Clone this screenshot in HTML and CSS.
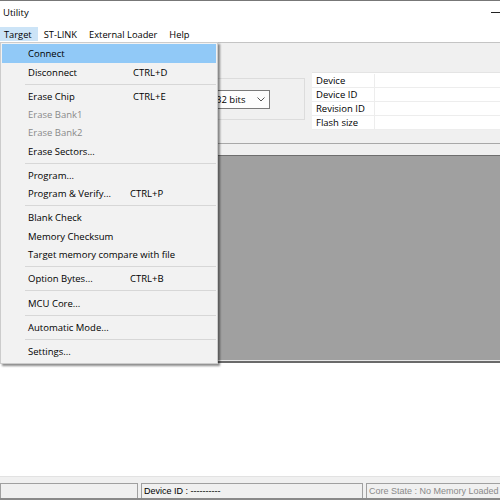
FILE: index.html
```html
<!DOCTYPE html>
<html>
<head>
<meta charset="utf-8">
<link rel="stylesheet" href="styles.css">
</head>
<body>
<div class="app">
  <div class="titlebar">
    <span class="title">Utility</span>
    <span class="minbtn"></span>
  </div>
  <div class="menubar">
    <span class="mitem active">Target</span>
    <span class="mitem">ST-LINK</span>
    <span class="mitem">External Loader</span>
    <span class="mitem">Help</span>
  </div>
  <div class="toolarea">
    <div class="groupbox">
      <div class="combo">
        <span class="combo-text">32 bits</span>
        <svg class="chev" width="8" height="5" viewBox="0 0 8 5"><path d="M0.5 0.5 L4 4 L7.5 0.5" fill="none" stroke="#555" stroke-width="1"/></svg>
      </div>
    </div>
    <div class="infotable">
      <div class="lbl">Device</div><div class="val"></div>
      <div class="lbl">Device ID</div><div class="val"></div>
      <div class="lbl">Revision ID</div><div class="val"></div>
      <div class="lbl">Flash size</div><div class="val"></div>
    </div>
  </div>
  <div class="tabbar"></div>
  <div class="grayframe"><div class="grayarea"></div></div>
  <div class="filler"></div>
  <div class="statusbar">
    <div class="panel p1"></div>
    <div class="panel p2">Device ID : ----------</div>
    <div class="panel p3">Core State : No Memory Loaded</div>
  </div>

  <div class="dropdown">
    <div class="item hover"><span class="lab">Connect</span></div>
    <div class="item"><span class="lab">Disconnect</span><span class="key k1">CTRL+D</span></div>
    <div class="sep"></div>
    <div class="item"><span class="lab">Erase Chip</span><span class="key k1">CTRL+E</span></div>
    <div class="item disabled"><span class="lab">Erase Bank1</span></div>
    <div class="item disabled"><span class="lab">Erase Bank2</span></div>
    <div class="item"><span class="lab">Erase Sectors...</span></div>
    <div class="sep"></div>
    <div class="item"><span class="lab">Program...</span></div>
    <div class="item"><span class="lab">Program &amp; Verify...</span><span class="key">CTRL+P</span></div>
    <div class="sep"></div>
    <div class="item"><span class="lab">Blank Check</span></div>
    <div class="item"><span class="lab">Memory Checksum</span></div>
    <div class="item"><span class="lab">Target memory compare with file</span></div>
    <div class="sep"></div>
    <div class="item"><span class="lab">Option Bytes...</span><span class="key">CTRL+B</span></div>
    <div class="sep"></div>
    <div class="item"><span class="lab">MCU Core...</span></div>
    <div class="sep"></div>
    <div class="item"><span class="lab">Automatic Mode...</span></div>
    <div class="sep"></div>
    <div class="item"><span class="lab">Settings...</span></div>
  </div>
</div>
</body>
</html>
```
FILE: styles.css
```css
* { box-sizing: border-box; }
html, body { margin: 0; padding: 0; background: #fff; }
.app {
  width: 500px;
  height: 500px;
  position: relative;
  overflow: hidden;
  display: flex;
  flex-direction: column;
  background: #fff;
  font-family: "Open Sans", "Noto Sans", sans-serif;
  font-size: 9.5px;
  color: #000;
}
.titlebar {
  height: 26px;
  flex: none;
  border-top: 1px solid #777;
  display: flex;
  align-items: center;
  justify-content: space-between;
  padding-left: 3px;
}
.title { line-height: 14px; margin-top: -2px; }
.minbtn {
  width: 9px;
  height: 1px;
  background: #222;
  margin-top: -2px;
}
.menubar {
  height: 16px;
  flex: none;
  display: flex;
  align-items: stretch;
  font-size: 9.3px;
}
.mitem {
  display: flex;
  align-items: center;
  padding: 0 6px;
  margin-top: 1px;
  margin-bottom: 1px;
}
.mitem:first-child { padding-left: 4px; padding-right: 6px; }
.mitem.active { background: #cce4f7; }
.toolarea {
  height: 101px;
  flex: none;
  background: #f0f0f0;
  border-top: 1px solid #c4c4c4;
  display: flex;
  align-items: flex-start;
}
.groupbox {
  margin-left: 150px;
  margin-top: 35px;
  width: 155px;
  height: 42px;
  border: 1px solid #dcdcdc;
  display: flex;
  align-items: center;
}
.combo {
  margin-left: 45px;
  width: 74px;
  height: 19px;
  border: 1px solid #7a7a7a;
  background: #fdfdfd;
  display: flex;
  align-items: center;
  justify-content: space-between;
  padding-left: 19px;
  padding-right: 4px;
}
.chev { display: block; }
.infotable {
  margin-left: 7px;
  margin-top: 29px;
  flex: 1;
  display: grid;
  grid-template-columns: 63px 1fr;
  background: #fff;
  border-top: 1px solid #e4e4e4;
  padding-top: 1px;
}
.lbl, .val {
  height: 14px;
  border-bottom: 1px solid #ededed;
  display: flex;
  align-items: center;
}
.lbl { padding-left: 4px; border-right: 1px solid #ededed; }
.tabbar {
  height: 13px;
  flex: none;
  background: #f0f0f0;
  border-top: 1px solid #a8a8a8;
  border-bottom: 1px solid #6e6e6e;
}
.grayframe {
  flex: none;
  border-bottom: 2px solid #6a6a6a;
}
.grayarea {
  height: 205px;
  background: #a0a0a0;
  border-bottom: 1px solid #e6e6e6;
}
.filler { flex: 1; }
.statusbar {
  height: 24px;
  flex: none;
  background: #f0f0f0;
  border-top: 1px solid #e2e2e2;
  border-bottom: 2px solid #8a8a8a;
  padding-top: 6px;
  display: flex;
  gap: 3px;
  font-family: "Liberation Sans", Arial, sans-serif;
  font-size: 9px;
}
.panel {
  height: 15px;
  border-top: 1px solid #a0a0a0;
  border-left: 1px solid #a0a0a0;
  border-right: 1px solid #a0a0a0;
  display: flex;
  align-items: center;
  padding-left: 2px;
  white-space: nowrap;
}
.p1 { width: 138px; }
.p2 { width: 222px; }
.p3 { flex: 1; color: #8a8a8a; border-right: none; }

.dropdown {
  position: absolute;
  left: 0;
  top: 42px;
  width: 218px;
  background: #f2f2f2;
  border: 1px solid #cccccc;
  box-shadow: 2px 2px 2px rgba(0, 0, 0, 0.45);
  padding: 1px 0 2px;
}
.item {
  height: 18.2px;
  margin: 0 1px;
  display: flex;
  align-items: center;
  padding-left: 26px;
  white-space: nowrap;
}
.item.hover { background: #91c9f7; height: 19px; }
.item.disabled { color: #8a8a8a; }
.lab { width: 102px; }
.key.k1 { margin-left: 3px; }
.sep {
  height: 1px;
  background: #d7d7d7;
  margin: 2.6px 1px 2.6px 24px;
}
```
